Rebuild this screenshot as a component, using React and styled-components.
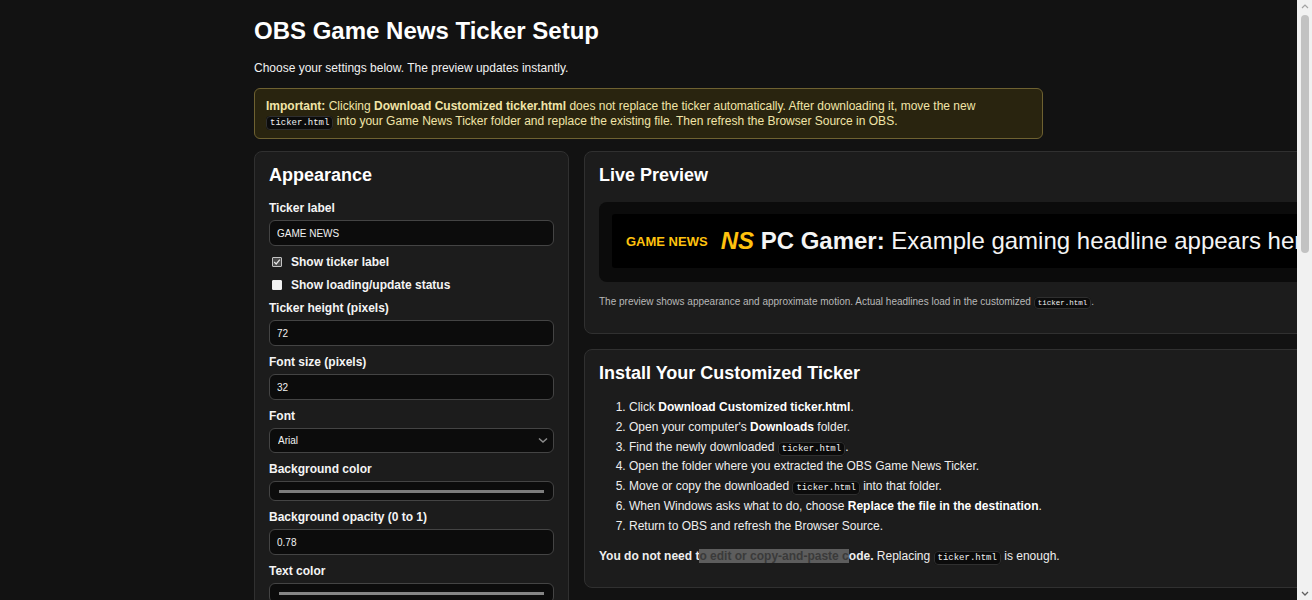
import React from "react"
import styled, { createGlobalStyle } from "styled-components"

const GlobalStyle = createGlobalStyle`
  body {
    margin: 0;
    padding-right: calc(15px - (100vw - 100%));
    background: #121212;
    color: #f1f1f1;
    font-family: "Liberation Sans", Arial, sans-serif;
    font-size: 12px;
    overflow-x: hidden;
  }
  * {
    box-sizing: border-box;
  }
`

const Page = styled.div`
  max-width: 789px;
  margin: 0 auto;
  padding: 17px 0 40px;
`

const Title = styled.h1`
  margin: 0;
  font-size: 24px;
  line-height: 28px;
  font-weight: bold;
  color: #ffffff;
`

const Intro = styled.p`
  margin: 16px 0 13px;
  line-height: 14px;
`

const Notice = styled.div`
  padding: 10px 11px 9px;
  border: 1px solid #6e6131;
  border-radius: 6px;
  background: #29240f;
  color: #f1e4a8;
  line-height: 15px;
`

const Code = styled.code`
  font-family: "Liberation Mono", "DejaVu Sans Mono", monospace;
  font-size: 0.75em;
  line-height: 1;
  padding: 1px 3px;
  border: 1px solid #2f2f2f;
  border-radius: 4px;
  background: #0b0b0b;
  color: #f1f1f1;
`

const Layout = styled.div`
  display: grid;
  grid-template-columns: 315px 1fr;
  gap: 15px;
  margin-top: 12px;
  align-items: start;
`

const Stack = styled.div`
  display: flex;
  flex-direction: column;
  gap: 15px;
`

const Panel = styled.section`
  background: #1c1c1c;
  border: 1px solid #303030;
  border-radius: 8px;
  padding: 13px 14px;
`

const PanelTitle = styled.h2`
  margin: 0 0 ${p => (p.$gap ? p.$gap : "15px")};
  font-size: 18px;
  line-height: 21px;
  font-weight: bold;
  color: #ffffff;
`

const Fields = styled.div`
  display: flex;
  flex-direction: column;
  gap: 9px;
`

const Field = styled.div`
  display: flex;
  flex-direction: column;
  gap: 5px;
`

const Label = styled.label`
  font-weight: bold;
  line-height: 14px;
  color: #f4f4f4;
`

const TextInput = styled.input`
  height: 26px;
  width: 100%;
  padding: 0 7px;
  border: 1px solid #444444;
  border-radius: 6px;
  background: #0c0c0c;
  color: #f1f1f1;
  font-family: "Liberation Sans", Arial, sans-serif;
  font-size: 10px;
  outline: none;
`

const SelectWrap = styled.div`
  position: relative;
`

const Select = styled.select`
  appearance: none;
  height: 25px;
  width: 100%;
  padding: 0 8px;
  border: 1px solid #444444;
  border-radius: 6px;
  background: #0c0c0c;
  color: #f1f1f1;
  font-family: "Liberation Sans", Arial, sans-serif;
  font-size: 10px;
  outline: none;
`

const Chevron = styled.svg`
  position: absolute;
  right: 6px;
  top: 9px;
  pointer-events: none;
`

const ColorBox = styled.div`
  height: 20px;
  padding: 0 9px;
  border: 1px solid #444444;
  border-radius: 6px;
  background: #0c0c0c;
  display: flex;
  align-items: center;
`

const Swatch = styled.div`
  flex: 1;
  height: 3px;
  margin-top: 1px;
  background: ${p => p.$color};
`

const CheckRow = styled.label`
  display: flex;
  align-items: center;
  gap: 9px;
  padding-left: 3px;
  line-height: 14px;
  font-weight: bold;
  color: #f4f4f4;
`

const Box = styled.span`
  width: 10px;
  height: 10px;
  border: 1px solid ${p => (p.$checked ? "#c4c4c4" : "#f0f0f0")};
  border-radius: 1px;
  background: ${p => (p.$checked ? "#4a4a4a" : "#f4f4f4")};
  display: flex;
  align-items: center;
  justify-content: center;
`

const PreviewFrame = styled.div`
  background: #0b0b0b;
  border-radius: 8px;
  padding: 12px 13px 14px;
`

const Ticker = styled.div`
  display: flex;
  align-items: center;
  height: 54px;
  padding-left: 14px;
  background: #000000;
  border-radius: 3px;
  white-space: nowrap;
  overflow: hidden;
`

const TickerLabel = styled.span`
  margin-right: 13px;
  font-size: 13px;
  font-weight: bold;
  color: #ffc20e;
`

const TickerTrack = styled.div`
  font-size: 24px;
  color: #f4f4f4;
`

const Tail = styled.em`
  font-weight: bold;
  color: #ffc20e;
`

const Caption = styled.p`
  margin: 14px 0 12px;
  font-size: 10px;
  line-height: 12px;
  color: #b8b8b8;
`

const Steps = styled.ol`
  margin: 0 0 13px;
  padding-left: 30px;

  li {
    line-height: 16.8px;
    margin-bottom: 3px;
    color: #eeeeee;
  }
  b {
    color: #ffffff;
  }
`

const Closing = styled.p`
  margin: 0 0 10px;
  line-height: 16.8px;
  color: #eeeeee;
`

const Faded = styled.span`
  background: #5d5d5d;
  color: #3a3a3a;
`

const ScrollRail = styled.div`
  position: fixed;
  top: 0;
  right: 0;
  bottom: 0;
  width: 15px;
  background: #f1f1f1;
  display: flex;
  flex-direction: column;
  align-items: center;
  justify-content: space-between;
  padding: 4px 0;
`

const ScrollThumb = styled.div`
  position: absolute;
  top: 15px;
  left: 4px;
  width: 8px;
  height: 238px;
  border-radius: 4px;
  background: #c2c2c2;
`

const textField = (label, value) => (
  <Field key={label}>
    <Label>{label}</Label>
    <TextInput defaultValue={value} />
  </Field>
)

const colorField = (label, color) => (
  <Field key={label}>
    <Label>{label}</Label>
    <ColorBox>
      <Swatch $color={color} />
    </ColorBox>
  </Field>
)

const CheckItem = ({ checked, children }) => (
  <CheckRow>
    <Box $checked={checked}>
      {checked && (
        <svg width="8" height="8" viewBox="0 0 8 8">
          <path d="M1.2 4 L3.2 6 L6.8 1.6" fill="none" stroke="#e8e8e8" strokeWidth="1.2" />
        </svg>
      )}
    </Box>
    {children}
  </CheckRow>
)

export default function App() {
  return (
    <>
      <GlobalStyle />
      <Page>
        <Title>OBS Game News Ticker Setup</Title>
        <Intro>Choose your settings below. The preview updates instantly.</Intro>
        <Notice>
          <b>Important:</b> Clicking <b>Download Customized ticker.html</b> does not
          replace the ticker automatically. After downloading it, move the new{" "}
          <Code>ticker.html</Code> into your Game News Ticker folder and replace the
          existing file. Then refresh the Browser Source in OBS.
        </Notice>

        <Layout>
          <Panel>
            <PanelTitle>Appearance</PanelTitle>
            <Fields>
              {textField("Ticker label", "GAME NEWS")}
              <CheckItem checked>Show ticker label</CheckItem>
              <CheckItem>Show loading/update status</CheckItem>
              {textField("Ticker height (pixels)", "72")}
              {textField("Font size (pixels)", "32")}
              <Field>
                <Label>Font</Label>
                <SelectWrap>
                  <Select defaultValue="Arial">
                    <option>Arial</option>
                    <option>Verdana</option>
                    <option>Tahoma</option>
                  </Select>
                  <Chevron width="10" height="7" viewBox="0 0 10 7">
                    <path d="M1 1.5 L5 5 L9 1.5" fill="none" stroke="#8c8c8c" strokeWidth="1.5" />
                  </Chevron>
                </SelectWrap>
              </Field>
              {colorField("Background color", "#7d7d7d")}
              {textField("Background opacity (0 to 1)", "0.78")}
              {colorField("Text color", "#858585")}
              {colorField("Label color", "#8a7a3a")}
              {textField("Scroll speed (pixels per second)", "90")}
            </Fields>
          </Panel>

          <Stack>
            <Panel>
              <PanelTitle $gap="16px">Live Preview</PanelTitle>
              <PreviewFrame>
                <Ticker>
                  <TickerLabel>GAME NEWS</TickerLabel>
                  <TickerTrack>
                    <Tail>NS</Tail> <b>PC Gamer:</b> Example gaming headline appears here
                    {"  •  "}
                    <b>IGN:</b> Another headline scrolls by
                  </TickerTrack>
                </Ticker>
              </PreviewFrame>
              <Caption>
                The preview shows appearance and approximate motion. Actual headlines load
                in the customized <Code>ticker.html</Code>.
              </Caption>
            </Panel>

            <Panel>
              <PanelTitle>Install Your Customized Ticker</PanelTitle>
              <Steps>
                <li>
                  Click <b>Download Customized ticker.html</b>.
                </li>
                <li>
                  Open your computer's <b>Downloads</b> folder.
                </li>
                <li>
                  Find the newly downloaded <Code>ticker.html</Code>.
                </li>
                <li>Open the folder where you extracted the OBS Game News Ticker.</li>
                <li>
                  Move or copy the downloaded <Code>ticker.html</Code> into that folder.
                </li>
                <li>
                  When Windows asks what to do, choose{" "}
                  <b>Replace the file in the destination</b>.
                </li>
                <li>Return to OBS and refresh the Browser Source.</li>
              </Steps>
              <Closing>
                <b>
                  You do not need t<Faded>o edit or copy-and-paste c</Faded>ode.
                </b>{" "}
                Replacing <Code>ticker.html</Code> is enough.
              </Closing>
            </Panel>
          </Stack>
        </Layout>
      </Page>

      <ScrollRail>
        <svg width="8" height="5" viewBox="0 0 8 5">
          <path d="M1 4 L4 1 L7 4" fill="none" stroke="#a3a3a3" strokeWidth="1.2" />
        </svg>
        <ScrollThumb />
        <svg width="8" height="5" viewBox="0 0 8 5">
          <path d="M1 1 L4 4 L7 1" fill="none" stroke="#606060" strokeWidth="1.3" />
        </svg>
      </ScrollRail>
    </>
  )
}
